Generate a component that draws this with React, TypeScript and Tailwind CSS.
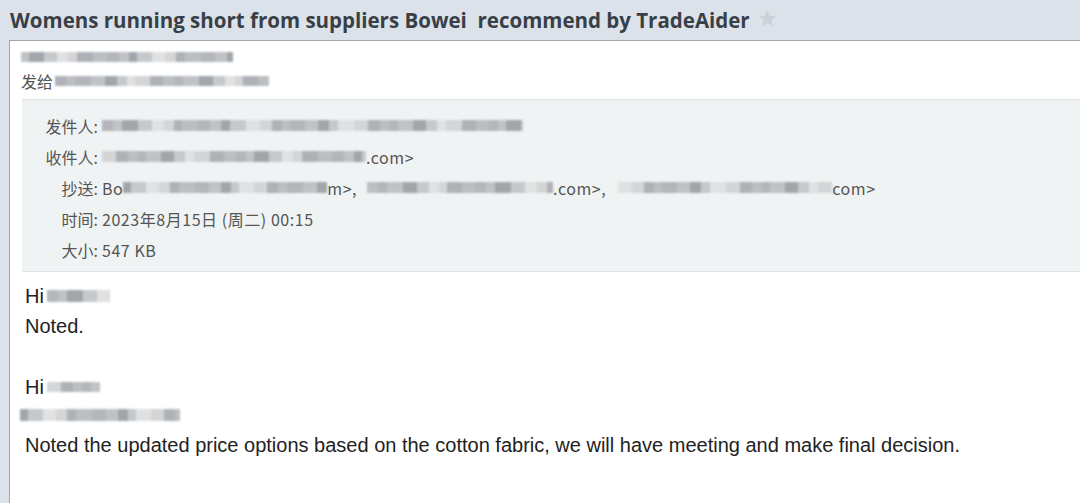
import React from "react";

const palette = ["#c6c9cc", "#b3b6ba", "#d3d5d7", "#a2a6aa", "#bcbfc2", "#dfe1e2", "#c0c3c6", "#aeb1b5"];

function Mosaic({ w, h = 11, seed = 0 }: { w: number; h?: number; seed?: number }) {
  const segs: { w: number; c: string }[] = [];
  let rest = w;
  let i = 0;
  while (rest > 0) {
    const sw = Math.min(rest, 8 + ((i * 7 + seed * 3) % 9));
    segs.push({ w: sw, c: palette[(i * 5 + seed) % palette.length] });
    rest -= sw;
    i++;
  }
  return (
    <span className="inline-flex items-center align-middle blur-[0.8px] shrink-0" style={{ height: h + 6 }}>
      {segs.map((s, k) => (
        <span key={k} className="inline-block" style={{ width: s.w, height: h, background: s.c }} />
      ))}
    </span>
  );
}

export default function App() {
  const rows: [string, React.ReactNode][] = [
    ["发件人:", <Mosaic w={421} seed={1} />],
    ["收件人:", <><Mosaic w={264} seed={2} /><span>.com&gt;</span></>],
    [
      "抄送:",
      <>
        <span>Bo</span>
        <Mosaic w={204} seed={3} />
        <span>m&gt;,</span>
        <span className="inline-block w-[10px]" />
        <Mosaic w={186} seed={4} />
        <span>.com&gt;,</span>
        <span className="inline-block w-[12px]" />
        <Mosaic w={214} seed={5} />
        <span>com&gt;</span>
      </>,
    ],
    ["时间:", <span>2023年8月15日 (周二) 00:15</span>],
    ["大小:", <span>547 KB</span>],
  ];
  return (
    <div className="w-[1080px] h-[503px] overflow-hidden bg-[#dbe2ea] flex flex-col">
      <div className="h-[40px] flex items-center pl-[10px] gap-[7px] shrink-0">
        <span className="text-[20.5px] font-bold text-[#393f46]" style={{ fontFamily: '"Open Sans", "Noto Sans", sans-serif' }}>
          Womens running short from suppliers Bowei&nbsp; recommend by TradeAider
        </span>
        <svg width="21" height="21" viewBox="0 0 24 24" className="mt-[-3px]">
          <path d="M12 2.5l2.9 6.3 6.9.7-5.2 4.6 1.5 6.8L12 17.4l-6.1 3.5 1.5-6.8-5.2-4.6 6.9-.7z" fill="#ccd2d9" />
        </svg>
      </div>
      <div className="ml-[9px] flex-1 bg-white border-l border-t border-[#9ea7b0] flex flex-col">
        <div className="pl-[11px] pt-[7px] text-[16px] text-[#555]" style={{ fontFamily: '"Noto Sans CJK SC", sans-serif' }}>
          <div className="h-[18px] flex items-center">
            <Mosaic w={212} h={10} seed={6} />
          </div>
          <div className="h-[26px] flex items-center gap-[2px] mt-[2px]">
            <span>发给</span>
            <Mosaic w={214} h={10} seed={7} />
          </div>
        </div>
        <div className="ml-[12px] mt-[5px] bg-[#f0f3f3] border-t border-b border-[#e0e4e4] pt-[10px] pb-[6px] text-[16px] text-[#555]" style={{ fontFamily: '"Noto Sans CJK SC", sans-serif' }}>
          {rows.map(([label, val], i) => (
            <div key={i} className="h-[31px] flex items-center">
              <span className="w-[76px] text-right shrink-0">{label}</span>
              <span className="ml-[4px] flex items-center whitespace-pre tracking-[0.55px]">{val}</span>
            </div>
          ))}
        </div>
        <div className="pl-[15px] pt-[9px] text-[20px] text-[#222] leading-[30px]" style={{ fontFamily: '"Liberation Sans", Arial, sans-serif' }}>
          <div className="h-[30px] flex items-center gap-[3px]"><span>Hi</span><Mosaic w={63} h={12} seed={1} /></div>
          <div className="h-[30px]">Noted.</div>
          <div className="h-[31px]" />
          <div className="h-[30px] flex items-center gap-[3px]"><span>Hi</span><Mosaic w={53} h={10} seed={2} /></div>
          <div className="h-[26px] flex items-center ml-[-5px]"><Mosaic w={160} h={12} seed={3} /></div>
          <div className="mt-[2px] h-[30px]">Noted the updated price options based on the cotton fabric, we will have meeting and make final decision.</div>
        </div>
      </div>
    </div>
  );
}
